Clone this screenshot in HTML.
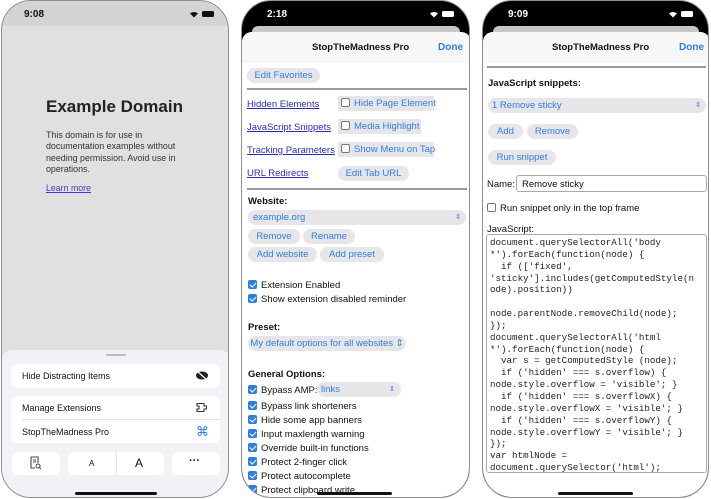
<!DOCTYPE html>
<html><head><meta charset="utf-8"><style>
*{box-sizing:border-box;margin:0;padding:0}
body{width:711px;height:499px;background:#fff;position:relative;overflow:hidden;font-family:"Liberation Sans",sans-serif;font-size:9.5px;color:#111}
.ph{position:absolute;top:0;height:498px;border:1.5px solid #8e8e8e;border-radius:30px;overflow:hidden;background:#fff}
.a{position:absolute;white-space:nowrap}
.btn{position:absolute;background:#e6e6e8;border-radius:8px;color:#2f7fe0;text-align:center;line-height:15px;height:15px;white-space:nowrap}
.lnk{position:absolute;color:#2b2bb8;text-decoration:underline;white-space:nowrap}
.cb{display:inline-block;width:9px;height:9px;border-radius:2px;vertical-align:-1px;margin-right:4px}
.on{background:#2f7fe0;position:relative}
.on:after{content:"";position:absolute;left:2.5px;top:0.5px;width:2.5px;height:5px;border:solid #fff;border-width:0 1.3px 1.3px 0;transform:rotate(45deg)}
.off{border:1px solid #777;background:#fff}
.bl{color:#2f7fe0}
.hr{position:absolute;height:1.5px;background:#999}
.home{position:absolute;height:3px;width:75px;background:#111;border-radius:2px}
pre{font-family:"Liberation Mono",monospace;font-size:9.2px;line-height:11.85px;color:#222}
</style></head><body>

<!-- Phone 1 -->
<div class="ph" style="left:1px;width:228px;background:#e0e0e0">
 <div class="a" style="left:0;top:0;width:228px;height:25px;background:#d4d4d4"></div>
 <div class="a" style="left:22px;top:8px;font-size:10px;font-weight:bold">9:08</div>
 <svg class="a" style="left:187px;top:9px" width="10" height="8" viewBox="0 0 10 8"><path d="M5 7.5L1 3.5A6 6 0 0 1 9 3.5Z" fill="#111"/></svg>
 <div class="a" style="left:200px;top:10px;width:12px;height:6px;background:#111;border-radius:1.5px"></div>
 <div class="a" style="left:44px;top:96px;font-size:17px;font-weight:bold;color:#222">Example Domain</div>
 <div class="a" style="left:44px;top:129px;font-size:8.9px;line-height:11.3px;color:#333;white-space:normal;width:150px">This domain is for use in documentation examples without needing permission. Avoid use in operations.</div>
 <div class="lnk" style="left:44px;top:182px;font-size:8.8px;color:#3b3bd0">Learn more</div>
 <div class="a" style="left:0;top:349px;width:228px;height:150px;background:#f2f2f6;border-radius:10px 10px 0 0"></div>
 <div class="a" style="left:104px;top:353px;width:20px;height:2px;background:#bbb;border-radius:1px"></div>
 <div class="a" style="left:9px;top:363px;width:209px;height:24px;background:#fff;border-radius:6px"></div>
 <div class="a" style="left:20px;top:370px;font-size:9px">Hide Distracting Items</div>
 <svg class="a" style="left:193px;top:369px" width="14" height="11" viewBox="0 0 14 11"><ellipse cx="7" cy="5.5" rx="6" ry="4" fill="#222"/><path d="M2 1L12 10" stroke="#fff" stroke-width="1.2"/></svg>
 <div class="a" style="left:9px;top:395px;width:209px;height:47px;background:#fff;border-radius:6px"></div>
 <div class="a" style="left:20px;top:402px;font-size:9px">Manage Extensions</div>
 <svg class="a" style="left:194px;top:401px" width="13" height="11" viewBox="0 0 13 11"><path d="M1 1.5H8V4H10.5V7H8V9.5H1V7H3V4H1Z" fill="none" stroke="#333" stroke-width="1.1"/></svg>
 <div class="a" style="left:20px;top:418px;width:198px;height:1px;background:#e5e5e5"></div>
 <div class="a" style="left:20px;top:426px;font-size:9px">StopTheMadness Pro</div>
 <div class="a" style="left:194px;top:423px;font-size:13px;color:#2f7fe0">&#8984;</div>
 <div class="a" style="left:10px;top:451px;width:48px;height:23px;background:#fff;border-radius:6px"></div>
 <svg class="a" style="left:28px;top:455px" width="12" height="14" viewBox="0 0 12 14"><path d="M1 1H8V7M5 12H1V1" fill="none" stroke="#444" stroke-width="1.1"/><path d="M3 4H6M3 6H6" stroke="#444"/><circle cx="8" cy="10" r="2" fill="none" stroke="#444"/><path d="M9.5 11.5L11 13" stroke="#444"/></svg>
 <div class="a" style="left:66px;top:451px;width:96px;height:23px;background:#fff;border-radius:6px"></div>
 <div class="a" style="left:114px;top:451px;width:1px;height:23px;background:#e5e5e5"></div>
 <div class="a" style="left:87px;top:458px;font-size:8px">A</div>
 <div class="a" style="left:133px;top:455px;font-size:12px">A</div>
 <div class="a" style="left:170px;top:451px;width:48px;height:23px;background:#fff;border-radius:6px"></div>
 <div class="a" style="left:187px;top:454px;font-size:11px;font-weight:bold">&middot;&middot;&middot;</div>
 <div class="home" style="left:73px;top:491px;width:82px"></div>
</div>

<!-- Phone 2 -->
<div class="ph" style="left:241px;width:229px;background:#000">
 <div class="a" style="left:25px;top:8px;font-size:10px;font-weight:bold;color:#fff">2:18</div>
 <svg class="a" style="left:187px;top:9px" width="10" height="8" viewBox="0 0 10 8"><path d="M5 7.5L1 3.5A6 6 0 0 1 9 3.5Z" fill="#fff"/></svg>
 <div class="a" style="left:200px;top:10px;width:12px;height:6px;background:#fff;border-radius:1.5px"></div>
 <div class="a" style="left:10px;top:25px;width:208px;height:10px;background:#c8c8c8;border-radius:6px 6px 0 0"></div>
 <div class="a" style="left:0;top:31px;width:229px;height:470px;background:#fff;border-radius:10px 10px 0 0"></div>
 <div class="a" style="left:0;top:31px;width:229px;height:31px;background:#f7f7f7;border-radius:10px 10px 0 0"></div>
 <div class="a" style="left:70px;top:41px;font-size:9.5px;font-weight:bold">StopTheMadness Pro</div>
 <div class="a bl" style="left:196px;top:41px;font-size:10px;font-weight:bold">Done</div>
 <div class="btn" style="left:5px;top:67px;width:73px">Edit Favorites</div>
 <div class="hr" style="left:5px;top:87px;width:220px"></div>
 <div class="lnk" style="left:5px;top:98px">Hidden Elements</div>
 <div class="a" style="left:96px;top:95px;width:96px;height:15px;background:#e6e6e8;line-height:15px;padding-left:3px;color:#2f7fe0"><span class="cb off"></span>Hide Page Element</div>
 <div class="lnk" style="left:5px;top:121px">JavaScript Snippets</div>
 <div class="a" style="left:96px;top:118px;width:83px;height:15px;background:#e6e6e8;line-height:15px;padding-left:3px;color:#2f7fe0"><span class="cb off"></span>Media Highlight</div>
 <div class="lnk" style="left:5px;top:144px">Tracking Parameters</div>
 <div class="a" style="left:96px;top:141px;width:96px;height:15px;background:#e6e6e8;line-height:15px;padding-left:3px;color:#2f7fe0"><span class="cb off"></span>Show Menu on Tap</div>
 <div class="lnk" style="left:5px;top:167px">URL Redirects</div>
 <div class="btn" style="left:96px;top:165px;width:71px">Edit Tab URL</div>
 <div class="hr" style="left:5px;top:187px;width:220px"></div>
 <div class="a" style="left:6px;top:195px;font-weight:bold">Website:</div>
 <div class="btn" style="left:6px;top:209px;width:218px;text-align:left;padding-left:5px">example.org<span style="position:absolute;right:5px;font-size:7px">&#8661;</span></div>
 <div class="btn" style="left:6px;top:228px;width:52px">Remove</div>
 <div class="btn" style="left:61px;top:228px;width:52px">Rename</div>
 <div class="btn" style="left:6px;top:246px;width:69px">Add website</div>
 <div class="btn" style="left:78px;top:246px;width:64px">Add preset</div>
 <div class="a" style="left:6px;top:279px"><span class="cb on"></span>Extension Enabled</div>
 <div class="a" style="left:6px;top:293px"><span class="cb on"></span>Show extension disabled reminder</div>
 <div class="a" style="left:6px;top:321px;font-weight:bold">Preset:</div>
 <div class="btn" style="left:6px;top:335px;width:158px">My default options for all websites &#8661;</div>
 <div class="a" style="left:6px;top:368px;font-weight:bold">General Options:</div>
 <div class="a" style="left:6px;top:384px"><span class="cb on"></span>Bypass AMP:</div>
 <div class="btn" style="left:75px;top:381px;width:84px;text-align:left;padding-left:4px">links<span style="position:absolute;right:6px;font-size:7px">&#8661;</span></div>
 <div class="a" style="left:6px;top:400px"><span class="cb on"></span>Bypass link shorteners</div>
 <div class="a" style="left:6px;top:414px"><span class="cb on"></span>Hide some app banners</div>
 <div class="a" style="left:6px;top:428px"><span class="cb on"></span>Input maxlength warning</div>
 <div class="a" style="left:6px;top:442px"><span class="cb on"></span>Override built-in functions</div>
 <div class="a" style="left:6px;top:456px"><span class="cb on"></span>Protect 2-finger click</div>
 <div class="a" style="left:6px;top:470px"><span class="cb on"></span>Protect autocomplete</div>
 <div class="a" style="left:6px;top:484px"><span class="cb on"></span>Protect clipboard write</div>
 <div class="home" style="left:75px;top:491px"></div>
</div>

<!-- Phone 3 -->
<div class="ph" style="left:482px;width:227px;background:#000">
 <div class="a" style="left:25px;top:8px;font-size:10px;font-weight:bold;color:#fff">9:09</div>
 <svg class="a" style="left:185px;top:9px" width="10" height="8" viewBox="0 0 10 8"><path d="M5 7.5L1 3.5A6 6 0 0 1 9 3.5Z" fill="#fff"/></svg>
 <div class="a" style="left:198px;top:10px;width:12px;height:6px;background:#fff;border-radius:1.5px"></div>
 <div class="a" style="left:10px;top:25px;width:206px;height:10px;background:#c8c8c8;border-radius:6px 6px 0 0"></div>
 <div class="a" style="left:0;top:31px;width:227px;height:470px;background:#fff;border-radius:10px 10px 0 0"></div>
 <div class="a" style="left:0;top:31px;width:227px;height:31px;background:#f7f7f7;border-radius:10px 10px 0 0"></div>
 <div class="a" style="left:69px;top:41px;font-size:9.5px;font-weight:bold">StopTheMadness Pro</div>
 <div class="a bl" style="left:196px;top:41px;font-size:10px;font-weight:bold">Done</div>
 <div class="hr" style="left:4px;top:65px;width:219px"></div>
 <div class="a" style="left:5px;top:77px;font-weight:bold">JavaScript snippets:</div>
 <div class="btn" style="left:5px;top:97px;width:218px;text-align:left;padding-left:4px">1 Remove sticky<span style="position:absolute;right:5px;font-size:7px">&#8661;</span></div>
 <div class="btn" style="left:5px;top:123px;width:35px">Add</div>
 <div class="btn" style="left:44px;top:123px;width:51px">Remove</div>
 <div class="btn" style="left:5px;top:149px;width:68px">Run snippet</div>
 <div class="a" style="left:4px;top:178px">Name:</div>
 <div class="a" style="left:33px;top:174px;width:191px;height:17px;border:1px solid #aaa;border-radius:3px;padding:3px 0 0 5px">Remove sticky</div>
 <div class="a" style="left:4px;top:202px"><span class="cb off" style="border-radius:2px"></span>Run snippet only in the top frame</div>
 <div class="a" style="left:4px;top:223px">JavaScript:</div>
 <div class="a" style="left:3px;top:233px;width:221px;height:239px;border:1px solid #aaa;border-radius:3px;padding:2px 0 0 3px;overflow:hidden"><pre>document.querySelectorAll('body
*').forEach(function(node) {
  if (['fixed',
'sticky'].includes(getComputedStyle(n
ode).position))

node.parentNode.removeChild(node);
});
document.querySelectorAll('html
*').forEach(function(node) {
  var s = getComputedStyle (node);
  if ('hidden' === s.overflow) {
node.style.overflow = 'visible'; }
  if ('hidden' === s.overflowX) {
node.style.overflowX = 'visible'; }
  if ('hidden' === s.overflowY) {
node.style.overflowY = 'visible'; }
});
var htmlNode =
document.querySelector('html');</pre></div>
 <div class="home" style="left:75px;top:491px"></div>
</div>
</body></html>
